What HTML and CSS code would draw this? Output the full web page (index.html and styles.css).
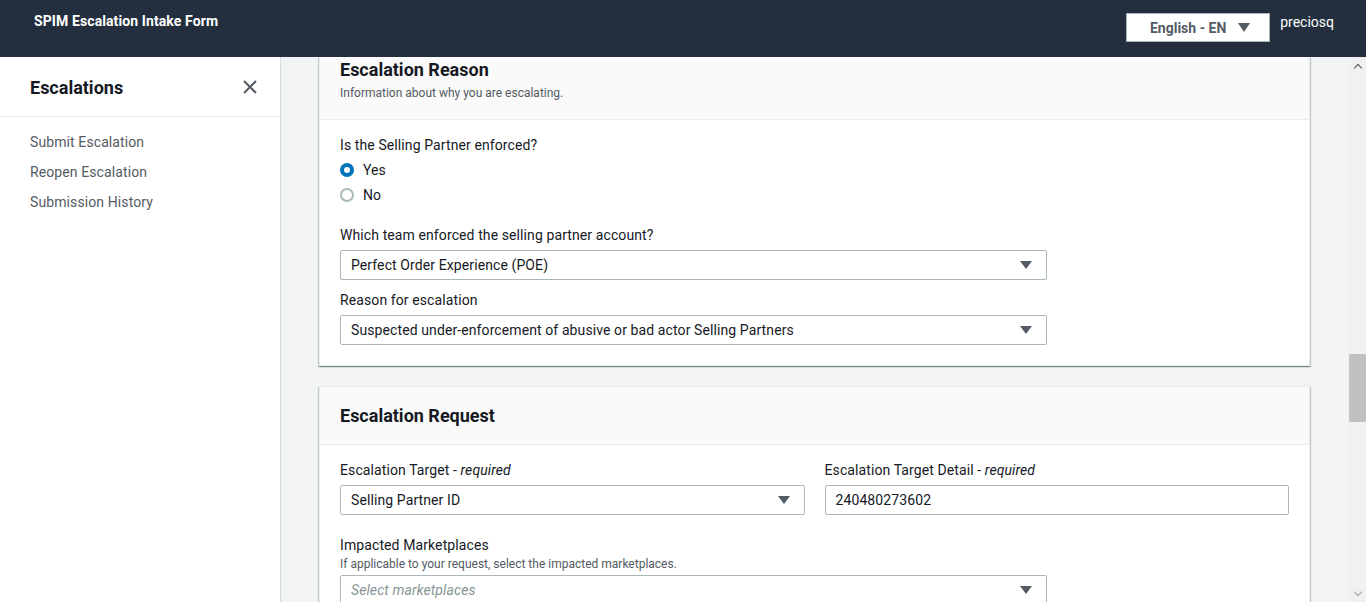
FILE: index.html
```html
<!DOCTYPE html>
<html lang="en">
<head>
<meta charset="utf-8">
<title>SPIM Escalation Intake Form</title>
<link rel="stylesheet" href="styles.css">
</head>
<body>
<header class="topbar">
  <div class="brand">SPIM Escalation Intake Form</div>
  <div class="top-right">
    <div class="lang">English - EN <span class="tri"></span></div>
    <div class="user">preciosq</div>
  </div>
</header>
<div class="layout">
  <nav class="sidebar">
    <div class="side-head">
      <h2>Escalations</h2>
      <svg class="close" width="16" height="16" viewBox="0 0 16 16"><path d="M2 2L14 14M14 2L2 14" stroke="#545b64" stroke-width="2" fill="none"/></svg>
    </div>
    <ul class="side-links">
      <li>Submit Escalation</li>
      <li>Reopen Escalation</li>
      <li>Submission History</li>
    </ul>
  </nav>
  <main class="main">
    <section class="card card-first">
      <div class="card-head first-head">
        <h3>Escalation Reason</h3>
        <p class="sub">Information about why you are escalating.</p>
      </div>
      <div class="card-body">
        <div class="field">
          <div class="label">Is the Selling Partner enforced?</div>
          <div class="radios">
            <div class="radio"><span class="dot on"></span>Yes</div>
            <div class="radio"><span class="dot"></span>No</div>
          </div>
        </div>
        <div class="field">
          <div class="label">Which team enforced the selling partner account?</div>
          <div class="select w-wide">Perfect Order Experience (POE)<span class="tri dark"></span></div>
        </div>
        <div class="field tight">
          <div class="label">Reason for escalation</div>
          <div class="select w-wide">Suspected under-enforcement of abusive or bad actor Selling Partners<span class="tri dark"></span></div>
        </div>
      </div>
    </section>
    <section class="card">
      <div class="card-head">
        <h3>Escalation Request</h3>
      </div>
      <div class="card-body">
        <div class="cols">
          <div class="field">
            <div class="label">Escalation Target - <em>required</em></div>
            <div class="select">Selling Partner ID<span class="tri dark"></span></div>
          </div>
          <div class="field">
            <div class="label">Escalation Target Detail - <em>required</em></div>
            <div class="input">240480273602</div>
          </div>
        </div>
        <div class="field">
          <div class="label">Impacted Marketplaces</div>
          <div class="desc">If applicable to your request, select the impacted marketplaces.</div>
          <div class="select w-wide placeholder">Select marketplaces<span class="tri dark"></span></div>
        </div>
      </div>
    </section>
  </main>
  <div class="scrollbar">
    <span class="arrow up"></span>
    <div class="track"><div class="thumb"></div></div>
    <span class="arrow down"></span>
  </div>
</div>
</body>
</html>
```

FILE: styles.css
```css
* { box-sizing: border-box; }
html, body { margin: 0; padding: 0; height: 100%; overflow: hidden; }
body {
  font-family: Roboto, "Liberation Sans", sans-serif;
  font-size: 14px;
  line-height: 20px;
  color: #16191f;
  background: #fff;
}
.topbar {
  height: 57px;
  background: #232f3e;
  display: flex;
  justify-content: space-between;
  align-items: flex-start;
  padding: 0 0 0 34px;
}
.brand {
  color: #fff;
  font-weight: 700;
  font-size: 14px;
  margin-top: 11px;
  letter-spacing: 0.1px;
}
.top-right { display: flex; align-items: flex-start; }
.lang {
  margin-top: 13px;
  width: 144px;
  height: 29px;
  background: #fff;
  border: 1px solid #aab7b8;
  color: #545b64;
  font-weight: 700;
  font-size: 14px;
  display: flex;
  align-items: center;
  justify-content: center;
  gap: 12px;
  padding-left: 4px;
}
.tri {
  display: inline-block;
  width: 0; height: 0;
  border-left: 6px solid transparent;
  border-right: 6px solid transparent;
  border-top: 9px solid #545b64;
}
.user {
  color: #fff;
  font-size: 14px;
  margin: 12px 32px 0 10px;
}
.layout {
  display: flex;
  height: calc(100% - 57px);
}
.sidebar {
  width: 281px;
  flex: none;
  background: #fff;
  border-right: 1px solid #d5dbdb;
}
.side-head {
  height: 60px;
  border-bottom: 1px solid #eaeded;
  display: flex;
  align-items: center;
  justify-content: space-between;
  padding: 0 22px 0 30px;
}
.side-head h2 {
  margin: 0;
  font-size: 18px;
  font-weight: 700;
  line-height: 22px;
  margin-top: 2px;
}
.close { display: block; margin-top: 1px; }
.side-links {
  list-style: none;
  margin: 0;
  padding: 15px 0 0 30px;
}
.side-links li {
  color: #545b64;
  line-height: 20px;
  margin-bottom: 10px;
  letter-spacing: 0.1px;
}
.main {
  flex: 1;
  background: #f2f3f3;
  padding: 0 39px 0 38px;
  overflow: hidden;
}
.card {
  background: #fff;
  border: 1px solid #eaeded;
  border-top: none;
  box-shadow: 0 1px 1px 0 rgba(0,28,36,.3), 1px 1px 1px 0 rgba(0,28,36,.15), -1px 1px 1px 0 rgba(0,28,36,.15);
  margin-bottom: 20px;
}
.card + .card { border-top: 1px solid #eaeded; }
.card-head {
  background: #fafafa;
  border-bottom: 1px solid #eaeded;
  padding: 18px 20px 17px 20px;
}
.first-head { padding-top: 2px; padding-bottom: 18px; }
.card-head h3 {
  margin: 0;
  font-size: 18px;
  font-weight: 700;
  line-height: 22px;
}
.sub {
  margin: 4px 0 0;
  font-size: 12px;
  line-height: 16px;
  color: #545b64;
}
.card-body { padding: 15px 20px 20px 20px; }
.field { margin-bottom: 20px; }
.field.tight { margin-top: -10px; }
.field:last-child { margin-bottom: 0; }
.label { line-height: 20px; margin-bottom: 5px; letter-spacing: 0.1px; }
.label em { font-style: italic; }
.desc { font-size: 12px; line-height: 16px; color: #545b64; margin: -4px 0 3px; }
.radios { display: flex; flex-direction: column; gap: 5px; }
.radio { display: flex; align-items: center; gap: 9px; line-height: 20px; padding-left: 0; }
.dot {
  width: 14px; height: 14px;
  border-radius: 50%;
  border: 2px solid #aab7b8;
  background: #fff;
}
.dot.on { border: 4px solid #0073bb; }
.select, .input {
  height: 30px;
  border: 1px solid #aab7b8;
  border-radius: 2px;
  padding: 0 14px 0 10px;
  display: flex;
  align-items: center;
  justify-content: space-between;
  background: #fff;
  letter-spacing: 0.1px;
}
.w-wide { width: 707px; }
.tri.dark { border-left-width: 6px; border-right-width: 6px; border-top-width: 8px; }
.placeholder { color: #879596; font-style: italic; }
.cols {
  display: grid;
  grid-template-columns: 1fr 1fr;
  gap: 20px;
  margin-bottom: 20px;
}
.cols .field { margin-bottom: 0; }
.scrollbar {
  width: 17px;
  flex: none;
  background: #f1f1f1;
  display: flex;
  flex-direction: column;
}
.track { flex: 1; position: relative; }
.thumb {
  margin-top: 280px;
  height: 68px;
  background: #c1c1c1;
}
.arrow { height: 17px; display: flex; align-items: center; justify-content: center; }
.arrow::before {
  content: "";
  width: 5px; height: 5px;
  border-left: 1.5px solid #505050;
  border-top: 1.5px solid #505050;
}
.arrow.up::before { transform: translateY(2px) rotate(45deg); }
.arrow.down::before { transform: translateY(-2px) rotate(225deg); border-color: #a3a3a3; }
```
